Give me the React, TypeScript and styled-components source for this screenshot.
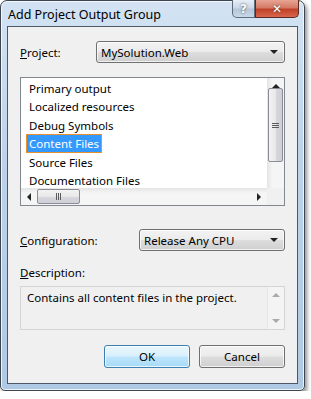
import React from "react";
import styled, { createGlobalStyle } from "styled-components";

const GlobalStyle = createGlobalStyle`
  html, body {
    margin: 0;
    padding: 0;
    background: #ffffff;
  }
  body {
    font-family: "Segoe UI", "Noto Sans", "Liberation Sans", sans-serif;
    font-size: 11.5px;
    color: #000;
  }
`;

const outputs = [
  "Primary output",
  "Localized resources",
  "Debug Symbols",
  "Content Files",
  "Source Files",
  "Documentation Files",
];

const Window = styled.div`
  width: 305px;
  height: 391px;
  box-sizing: border-box;
  border: 1px solid #3c4550;
  border-radius: 7px 7px 5px 5px;
  background: linear-gradient(180deg, #d3e3f3 0%, #bcd3ea 40%, #afc9e4 100%);
  box-shadow: 2px 3px 4px rgba(0, 0, 0, 0.45), inset 0 0 0 1px rgba(255, 255, 255, 0.75);
  display: flex;
  flex-direction: column;
  padding: 0 6px 6px 6px;
`;

const TitleBar = styled.div`
  height: 25px;
  display: flex;
  align-items: flex-start;
  justify-content: space-between;
`;

const Title = styled.div`
  font-size: 12.5px;
  padding: 5px 0 0 1px;
  color: #000;
`;

const CaptionButtons = styled.div`
  display: flex;
  margin-right: -1px;
  margin-top: -1px;
`;

const CaptionButton = styled.div<{ $close?: boolean }>`
  width: ${(p) => (p.$close ? "44px" : "23px")};
  height: 18px;
  box-sizing: border-box;
  border: 1px solid ${(p) => (p.$close ? "#5b2a23" : "#5f6b78")};
  border-top: none;
  border-radius: ${(p) => (p.$close ? "0 0 5px 0" : "0 0 0 5px")};
  background: ${(p) =>
    p.$close
      ? "linear-gradient(180deg, #e8a493 0%, #d47a66 45%, #c0412a 55%, #d7674d 100%)"
      : "linear-gradient(180deg, #e6eef6 0%, #cbd8e6 45%, #b4c6d9 55%, #c9d8e8 100%)"};
  display: flex;
  align-items: center;
  justify-content: center;
  color: #fff;
  font-family: "DejaVu Sans", sans-serif;
  font-weight: bold;
  font-size: 12px;
  text-shadow: 0 0 2px #333;
`;

const Client = styled.div`
  flex: 1;
  background: #f0f0f0;
  border: 1px solid #4d5866;
  display: flex;
  flex-direction: column;
  padding: 14px 12px 0 12px;
`;

const Row = styled.div<{ $split: number }>`
  display: grid;
  grid-template-columns: ${(p) => p.$split}px 1fr;
  align-items: center;
  height: 22px;
`;

const Label = styled.label`
  color: #000;
  u {
    text-decoration: underline;
  }
`;

const Combo = styled.div`
  height: 22px;
  box-sizing: border-box;
  border: 1px solid #707070;
  border-radius: 3px;
  background: linear-gradient(180deg, #f3f3f3 0%, #ebebeb 48%, #dddddd 52%, #cfcfcf 100%);
  box-shadow: inset 0 0 0 1px rgba(255, 255, 255, 0.7);
  display: flex;
  align-items: center;
  justify-content: space-between;
  padding: 0 6px 0 4px;
`;

const Arrow = styled.span<{ $dir: "down" | "up" | "left" | "right"; $muted?: boolean }>`
  width: 0;
  height: 0;
  border-style: solid;
  border-color: transparent;
  ${(p) => {
    const c = p.$muted ? "#a9a9a9" : "#222";
    if (p.$dir === "down") return `border-width: 4px 4px 0 4px; border-top-color: ${c};`;
    if (p.$dir === "up") return `border-width: 0 4px 4px 4px; border-bottom-color: ${c};`;
    if (p.$dir === "left") return `border-width: 4px 4px 4px 0; border-right-color: ${c};`;
    return `border-width: 4px 0 4px 4px; border-left-color: ${c};`;
  }}
`;

const ListBox = styled.div`
  margin-top: 14px;
  height: 129px;
  box-sizing: border-box;
  border: 1px solid #828790;
  background: #fff;
  display: grid;
  grid-template-columns: minmax(0, 1fr) 17px;
  grid-template-rows: minmax(0, 1fr) 17px;
`;

const Items = styled.div`
  padding: 1px 0 0 5px;
  overflow: hidden;
`;

const ItemLine = styled.div`
  height: 18.4px;
`;

const Item = styled.div<{ $selected?: boolean }>`
  height: 19px;
  line-height: 17px;
  box-sizing: border-box;
  display: inline-block;
  padding: 0 2px;
  border: 1px solid ${(p) => (p.$selected ? "#e8902c" : "transparent")};
  background: ${(p) => (p.$selected ? "#3399ff" : "transparent")};
  color: ${(p) => (p.$selected ? "#fff" : "#000")};
  white-space: nowrap;
`;

const VScroll = styled.div<{ $muted?: boolean }>`
  background: ${(p) => (p.$muted ? "#f4f4f4" : "linear-gradient(90deg, #e4e4e4 0%, #f5f5f5 30%, #f5f5f5 100%)")};
  border-left: ${(p) => (p.$muted ? "1px solid #e6e6e6" : "none")};
  display: flex;
  flex-direction: column;
  align-items: center;
  justify-content: space-between;
  padding: 6px 0;
  box-sizing: border-box;
`;

const VThumb = styled.div`
  width: 15px;
  height: 76px;
  box-sizing: border-box;
  border: 1px solid #8c8c96;
  border-radius: 2px;
  background: linear-gradient(90deg, #f2f2f2 0%, #e8e8e8 50%, #d6d6dc 55%, #cfcfd8 100%);
  display: flex;
  align-items: center;
  justify-content: center;
`;

const VSpacer = styled.span`
  height: 20px;
`;

const HScroll = styled.div`
  background: linear-gradient(180deg, #e4e4e4 0%, #f5f5f5 30%, #f5f5f5 100%);
  display: flex;
  align-items: center;
  padding: 0 6px;
`;

const HThumb = styled.div`
  width: 43px;
  height: 15px;
  box-sizing: border-box;
  margin-left: 6px;
  margin-right: auto;
  border: 1px solid #8c8c96;
  border-radius: 2px;
  background: linear-gradient(180deg, #f2f2f2 0%, #e8e8e8 50%, #d6d6dc 55%, #cfcfd8 100%);
  display: flex;
  align-items: center;
  justify-content: center;
`;

const Corner = styled.div`
  background: #f0f0f0;
`;

const Grip = styled.div<{ $vertical?: boolean }>`
  display: flex;
  flex-direction: ${(p) => (p.$vertical ? "column" : "row")};
  gap: 1px;
  span {
    display: block;
    background: #5a5a5a;
    width: ${(p) => (p.$vertical ? "7px" : "1px")};
    height: ${(p) => (p.$vertical ? "1px" : "7px")};
  }
`;

const ConfigRow = styled(Row)`
  margin-top: 23px;
  height: 21px;
`;

const DescLabel = styled(Label)`
  margin-top: 15px;
  display: block;
`;

const DescBox = styled.div`
  margin-top: 6px;
  height: 44px;
  box-sizing: border-box;
  border: 1px solid #d2d4d8;
  background: #f0f0f0;
  display: grid;
  grid-template-columns: 1fr 17px;
`;

const DescText = styled.div`
  padding: 3px 0 0 6px;
`;

const Buttons = styled.div`
  margin-top: 15px;
  display: flex;
  justify-content: flex-end;
  gap: 9px;
`;

const Button = styled.div<{ $default?: boolean }>`
  width: 86px;
  height: 23px;
  box-sizing: border-box;
  border: 1px solid ${(p) => (p.$default ? "#3c7fb1" : "#707070")};
  border-radius: 3px;
  background: ${(p) =>
    p.$default
      ? "linear-gradient(180deg, #eaf6fd 0%, #d9f0fc 48%, #bee6fd 52%, #a7d9f5 100%)"
      : "linear-gradient(180deg, #f2f2f2 0%, #ebebeb 48%, #dddddd 52%, #cfcfcf 100%)"};
  box-shadow: inset 0 0 0 1px rgba(255, 255, 255, 0.75);
  display: flex;
  align-items: center;
  justify-content: center;
`;

export default function App() {
  return (
    <>
      <GlobalStyle />
      <Window>
        <TitleBar>
          <Title>Add Project Output Group</Title>
          <CaptionButtons>
            <CaptionButton>?</CaptionButton>
            <CaptionButton $close>✕</CaptionButton>
          </CaptionButtons>
        </TitleBar>
        <Client>
          <Row $split={76}>
            <Label>
              <u>P</u>roject:
            </Label>
            <Combo>
              <span>MySolution.Web</span>
              <Arrow $dir="down" />
            </Combo>
          </Row>

          <ListBox>
            <Items>
              {outputs.map((name) => (
                <ItemLine key={name}>
                  <Item $selected={name === "Content Files"}>{name}</Item>
                </ItemLine>
              ))}
            </Items>
            <VScroll>
              <Arrow $dir="up" />
              <VThumb>
                <Grip $vertical>
                  <span />
                  <span />
                  <span />
                </Grip>
              </VThumb>
              <VSpacer />
            </VScroll>
            <HScroll>
              <Arrow $dir="left" />
              <HThumb>
                <Grip>
                  <span />
                  <span />
                  <span />
                </Grip>
              </HThumb>
              <Arrow $dir="right" />
            </HScroll>
            <Corner />
          </ListBox>

          <ConfigRow $split={119}>
            <Label>
              <u>C</u>onfiguration:
            </Label>
            <Combo>
              <span>Release Any CPU</span>
              <Arrow $dir="down" />
            </Combo>
          </ConfigRow>

          <DescLabel>
            <u>D</u>escription:
          </DescLabel>
          <DescBox>
            <DescText>Contains all content files in the project.</DescText>
            <VScroll $muted>
              <Arrow $dir="up" $muted />
              <Arrow $dir="down" $muted />
            </VScroll>
          </DescBox>

          <Buttons>
            <Button $default>OK</Button>
            <Button>Cancel</Button>
          </Buttons>
        </Client>
      </Window>
    </>
  );
}
